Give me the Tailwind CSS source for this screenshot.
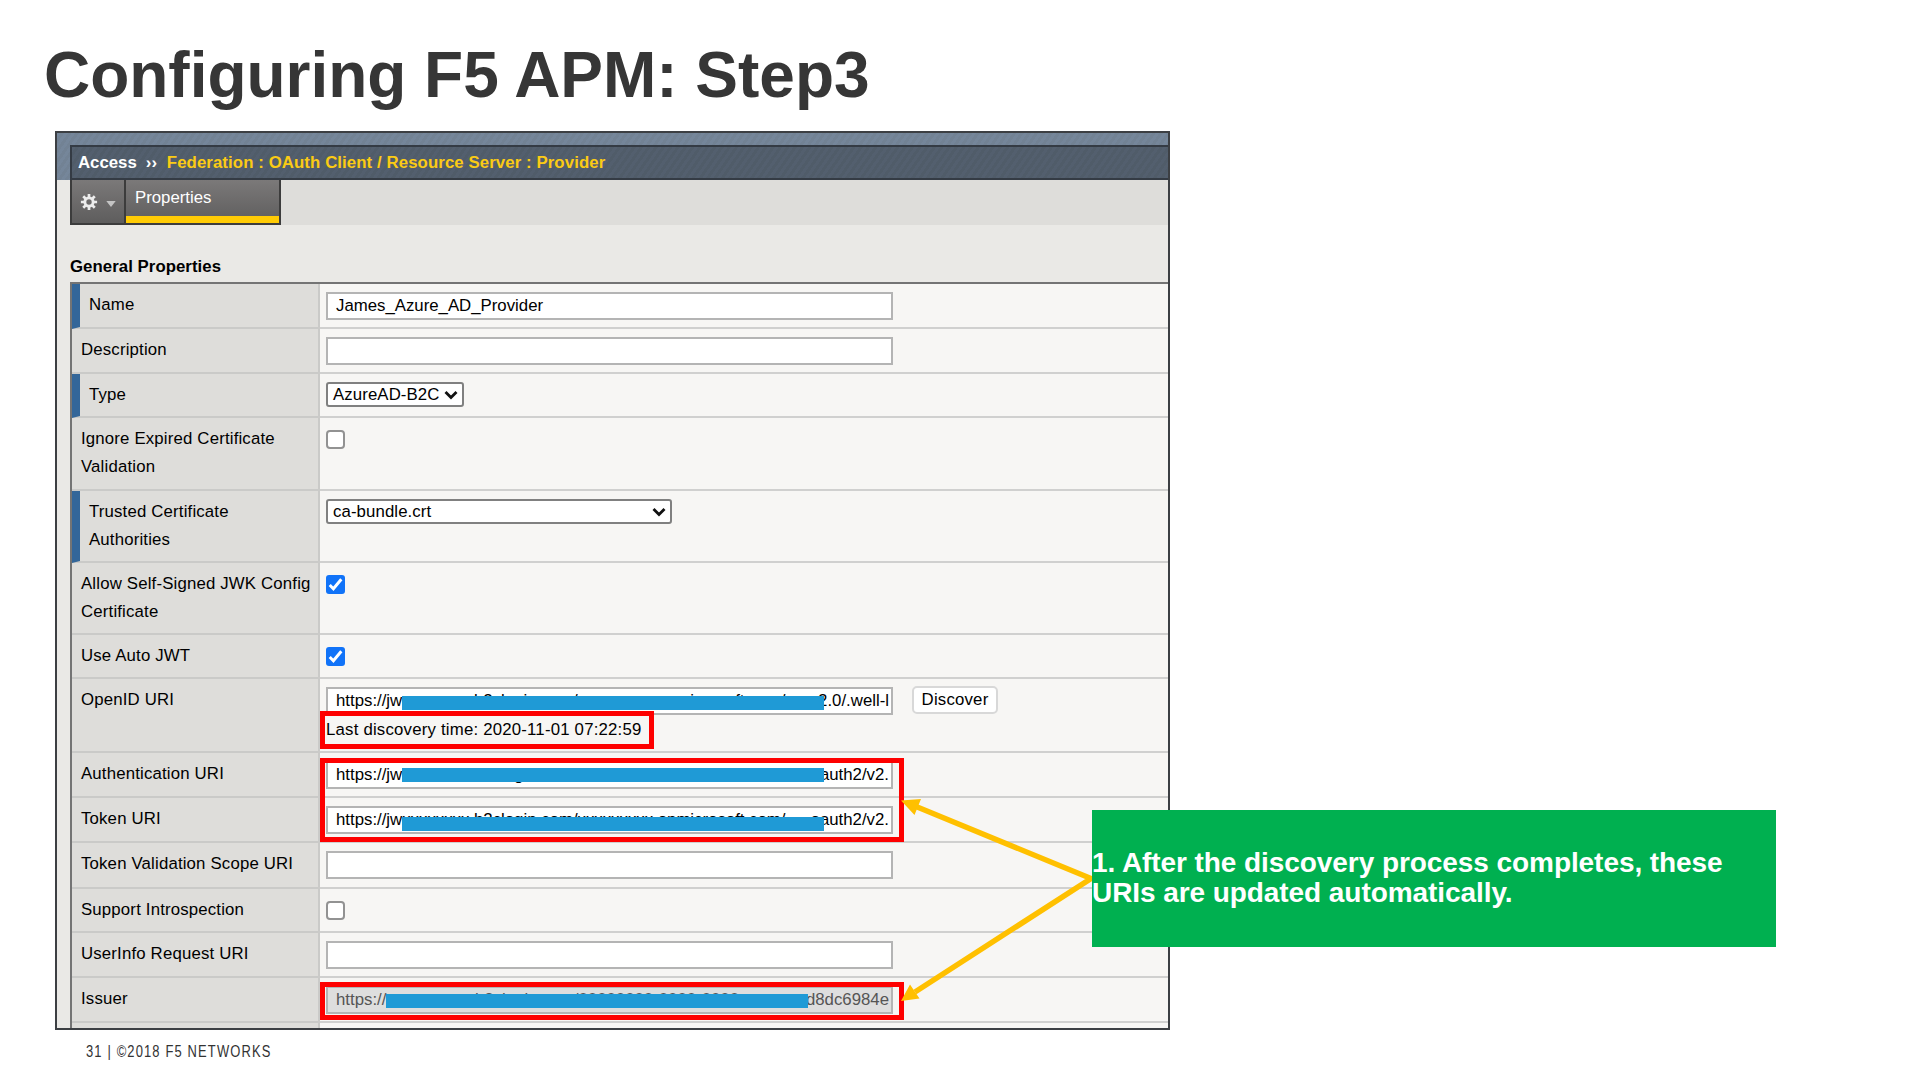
<!DOCTYPE html>
<html lang="en">
<head>
<meta charset="utf-8">
<title>Configuring F5 APM: Step3</title>
<script src="https://cdn.jsdelivr.net/npm/@tailwindcss/browser@4"></script>
</head>
<body class="relative h-[1080px] w-[1920px] overflow-hidden bg-white font-['Liberation_Sans',Arial,sans-serif] text-black">
<h1 class="h-[131px] pt-[38px] pl-[44px] text-[64px] leading-[74px] font-bold tracking-[-0.02px] whitespace-nowrap text-[#363636]">Configuring F5 APM: Step3</h1>

<main class="ml-[55px] flex h-[899px] w-[1115px] flex-col overflow-hidden border-2 border-[#3c3f43] bg-[#eae9e6] text-[16.8px] leading-[28px] whitespace-nowrap">
  <header class="shrink-0 bg-[repeating-linear-gradient(125deg,#75869a_0_3px,#728294_3px_6px)] pt-[12px] pl-[13px]">
    <div class="flex h-[35px] items-center border-y-2 border-l-2 border-[#343b44] bg-[repeating-linear-gradient(125deg,#535f6e_0_3px,#505c69_3px_6px)] pl-[6px] text-[16.8px] font-bold">
      <span class="text-white">Access</span>
      <span class="ml-[9px] w-[21px] text-white">››</span>
      <span class="tracking-[0.09px] text-[#fbcb14]">Federation : OAuth Client / Resource Server : Provider</span>
    </div>
  </header>
  <nav class="ml-[13px] flex h-[45px] shrink-0 bg-[#dedddA]">
    <div class="flex w-[56px] items-center border-2 border-t-0 border-[#3c3c3c] bg-linear-to-b from-[#7b7979] to-[#5e5d5d] pl-[8px]">
      <svg class="size-[18px]" viewBox="-10 -10 20 20"><g stroke="#ececec" stroke-width="3"><path d="M0-9V-5M0 9V5M-9 0H-5M9 0H5M-6.4-6.4-3.6-3.6M6.4 6.4 3.6 3.6M-6.4 6.4-3.6 3.6M6.4-6.4 3.6-3.6"/><circle r="4.6" fill="none" stroke-width="3.2"/></g></svg>
      <svg class="mt-[4px] ml-[8px] h-[6px] w-[10px]" viewBox="0 0 11 7"><path d="M0 0H11L5.5 7Z" fill="#c4c4c4"/></svg>
    </div>
    <div class="flex w-[155px] flex-col border-r-2 border-b-2 border-[#3c3c3c] bg-linear-to-b from-[#7b7979] to-[#5e5d5d]">
      <span class="h-[36px] pt-[4px] pl-[9px] text-[16.8px] text-white">Properties</span>
      <span class="h-[7px] bg-[#ffcb05]"></span>
    </div>
  </nav>
  <h2 class="h-[57px] shrink-0 pt-[28px] pl-[13px] text-[16.8px] font-bold tracking-[0.05px]">General Properties</h2>

  <section class="ml-[13px] grid grow grid-cols-[248px_1fr] grid-rows-[45px_45px_44px_73px_72px_72px_44px_74px_45px_45px_46px_44px_45px_45px_6px] border-t-2 border-l-2 border-[#747474] bg-[#f7f6f4]" id="rows"></section>
</main>

<footer class="pt-[12px] pl-[86px] text-[16px] leading-[20px] whitespace-nowrap text-[#333]"><span class="inline-block origin-left scale-x-[0.81] tracking-[1.4px]">31 | ©2018 F5 NETWORKS</span></footer>

<!-- annotations laid over the form -->
<div class="absolute top-[696px] left-[402px] h-[14px] w-[422px] bg-[#1f9ad6]"></div>
<div class="absolute top-[768px] left-[402px] h-[14px] w-[422px] bg-[#1f9ad6]"></div>
<div class="absolute top-[817px] left-[402px] h-[14px] w-[422px] bg-[#1f9ad6]"></div>
<div class="absolute top-[994px] left-[386px] h-[14px] w-[422px] bg-[#1f9ad6]"></div>
<div class="absolute top-[711px] left-[320px] h-[38px] w-[334px] border-5 border-[#fe0000]"></div>
<div class="absolute top-[758px] left-[320px] h-[84px] w-[584px] border-5 border-[#fe0000]"></div>
<div class="absolute top-[982px] left-[320px] h-[38px] w-[584px] border-5 border-[#fe0000]"></div>
<svg class="absolute top-[780px] left-[890px] h-[240px] w-[210px]" viewBox="890 780 210 240">
  <path d="M916 806.5 1091 878.5 915 992" fill="none" stroke="#ffc000" stroke-width="5.5"/>
  <path d="M901 800.5 921 799 914.5 815ZM901 1001 910 984.500 919.500 998.500Z" fill="#ffc000"/>
</svg>
<aside class="absolute top-[810px] left-[1092px] flex h-[137px] w-[684px] items-center bg-[#00b050] pb-[2px] text-[28px] leading-[30px] font-bold tracking-[-0.07px] whitespace-nowrap text-white"><p>1. After the discovery process completes, these<br>URIs are updated automatically.</p></aside>

<script>
const box = 'flex h-[28px] w-[567px] items-center justify-between border-2 border-[#b4b4b4] bg-white pr-[2px] pl-[8px]';
const input = (a = '', b = '', cls = '') => `<div class="${box} ${cls}"><span>${a}</span><span>${b}</span></div>`;
const select = (t, w) => `<div class="${w} flex h-[25px] items-center justify-between rounded-[3px] border-2 border-[#808080] bg-white pr-[4px] pl-[5px] tracking-[0.1px]"><span>${t}</span><svg class="h-[10px] w-[14px]" viewBox="0 0 14 10"><path d="M1.500 2 7 7.500 12.500 2" fill="none" stroke="#111" stroke-width="2.800"/></svg></div>`;
const off = '<div class="mt-[4px] size-[19px] rounded-[4px] border-2 border-[#929292] bg-white"></div>';
const on = '<svg class="mt-[4px] size-[19px] rounded-[3px] bg-[#1173f8]" viewBox="0 0 18 18"><path d="M3.500 9.500 7 13 14.500 4" fill="none" stroke="#fff" stroke-width="2.800"/></svg>';
const rows = [
  ['Name', input('James_Azure_AD_Provider'), 1],
  ['Description', input()],
  ['Type', select('AzureAD-B2C', 'w-[138px]'), 1],
  ['Ignore Expired Certificate<br>Validation', off],
  ['Trusted Certificate<br>Authorities', select('ca-bundle.crt', 'w-[346px]'), 1],
  ['Allow Self-Signed JWK Config<br>Certificate', on],
  ['Use Auto JWT', on],
  ['OpenID URI', `<div class="flex items-start gap-[19px]">${input('https://jwxxxxxxxx.b2clogin.com/xxxxxxxxx.onmicrosoft.com/v', '2.0/.well-l')}<div class="-mt-[1px] flex h-[28px] w-[86px] items-center justify-center rounded-[5px] border-2 border-[#d8d8d8] bg-white tracking-[0.2px]">Discover</div></div><div class="mt-[1px] tracking-[0.2px]">Last discovery time: 2020-11-01 07:22:59</div>`],
  ['Authentication URI', input('https://jwxxxxxxxx.b2clogin.com/xxxxxxxxx.onmicrosoft.com/', 'oauth2/v2.')],
  ['Token URI', input('https://jwxxxxxxxx.b2clogin.com/xxxxxxxxx.onmicrosoft.com/', 'oauth2/v2.')],
  ['Token Validation Scope URI', input()],
  ['Support Introspection', off],
  ['UserInfo Request URI', input()],
  ['Issuer', input('https://xxxxxxxxxx.b2clogin.com/00000000-0000-0000', 'd8dc6984e', 'bg-[#dedede]! text-[#555]')],
  ['', '']
];
document.getElementById('rows').innerHTML = rows.map(([l, v, req]) =>
  `<div class="border-r-2 border-b-2 border-[#cacac8] bg-[#dedddA] pt-[7px] tracking-[0.17px] ${req ? 'border-l-8 border-l-[#336699] pl-[9px]' : 'pl-[9px]'}">${l}</div><div class="border-b-2 border-[#d0d0cf] pt-[8px] pl-[6px]">${v}</div>`).join('');
</script>
</body>
</html>
